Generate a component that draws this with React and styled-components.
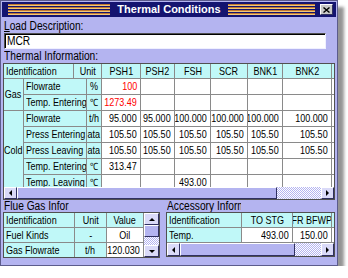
import styled, { createGlobalStyle, css } from 'styled-components';

const LAV = '#b4b4f0';
const CYAN = '#c0f8f8';
const LINE = '#8a8a8a';
const NAVY = '#141470';

const GlobalStyle = createGlobalStyle`
  html, body { margin: 0; padding: 0; background: #ffffff; }
  body { font-family: "Liberation Sans", Arial, sans-serif; color: #000; }
  * { box-sizing: border-box; }
`;

const bevel = css`
  border: 1px solid;
  border-color: #ffffff #303060 #303060 #ffffff;
`;

const justify = { left: 'flex-start', center: 'center', right: 'flex-end' };

// the original uses a narrow bitmap font, so squeeze the glyphs horizontally
const Txt = styled.span`
  display: inline-block;
  flex: none;
  white-space: nowrap;
  transform: scaleX(${p => p.$sx || 0.82});
  transform-origin: ${p => p.$origin || 'left'} center;
`;

const Window = styled.div`
  width: 338px;
  height: 266px;
  background: ${LAV};
  border: 1px solid #5c5c8c;
  padding: 1px;
  box-shadow: 6px 7px 3px rgba(0, 0, 0, 0.42);
  display: flex;
  flex-direction: column;
`;

const TitleBar = styled.div`
  height: 15px;
  background: ${NAVY};
  display: grid;
  grid-template-columns: 1fr auto 1fr;
  align-items: center;
`;

const TitleSide = styled.div`
  display: flex;
  align-items: center;
  padding: ${p => (p.$right ? '0 3px 0 0' : '0 0 0 6px')};
`;

const Stripes = styled.div`
  flex: 1;
  height: 11px;
  background: repeating-linear-gradient(to bottom, #c07830 0 1px, #f0c878 1px 2px, ${NAVY} 2px 3px);
`;

const TitleText = styled.div`
  padding: 0 7px;
  color: #fff;
  font-weight: bold;
  font-size: 11px;
  line-height: 15px;
  white-space: nowrap;
`;

const CloseButton = styled.div`
  ${bevel}
  width: 13px;
  height: 11px;
  margin-left: 5px;
  background: #c8c8c8;
  display: flex;
  align-items: center;
  justify-content: center;
`;

const Body = styled.div`
  flex: 1;
  padding: 0 1px;
  display: flex;
  flex-direction: column;
`;

const Label = styled.div`
  font-size: 12px;
  line-height: ${p => p.$h || 14}px;
  height: ${p => p.$h || 14}px;
  padding-left: 1px;
  margin-top: ${p => p.$mt || 0}px;
  width: ${p => (p.$w ? `${p.$w}px` : 'auto')};
  display: flex;
  overflow: hidden;
`;

const TextBox = styled.div`
  margin-left: 1px;
  width: 322px;
  height: 16px;
  background: #fff;
  border: 1px solid;
  border-color: #505050 #f0f0ff #f0f0ff #505050;
  box-shadow: inset 1px 1px 0 #000;
  font-size: 12px;
  line-height: 14px;
  padding-left: 2px;
  display: flex;
`;

const Frame = styled.div`
  border: 1px solid #505050;
  width: ${p => p.$w}px;
  background: ${LINE};
  display: flex;
  flex-direction: column;
  flex: none;
`;

const Viewport = styled.div`
  height: ${p => p.$h}px;
  overflow: hidden;
  display: flex;
  flex-direction: column;
  gap: 1px;
`;

const Sheet = styled.div`
  display: grid;
  grid-template-columns: ${p => p.$cols};
  grid-auto-rows: ${p => p.$row}px;
  gap: 1px;
`;

const Cell = styled.div`
  background: ${p => (p.$cyan ? CYAN : '#ffffff')};
  color: ${p => (p.$red ? '#ff0000' : '#000')};
  font-size: ${p => p.$fs || 11}px;
  display: flex;
  align-items: center;
  justify-content: ${p => justify[p.$align || 'left']};
  padding: 0 ${p => (p.$align === 'right' ? '3px' : '0')} 1px ${p => (!p.$align || p.$align === 'left' ? '2px' : '0')};
  overflow: hidden;
  grid-row: ${p => (p.$span ? `span ${p.$span}` : 'auto')};
`;

const HScroll = styled.div`
  height: ${p => p.$h || 13}px;
  display: flex;
  background: repeating-conic-gradient(${LAV} 0 25%, #ffffff 0 50%) 0 0 / 2px 2px;
  flex: none;
`;

const VScroll = styled.div`
  grid-column: 4;
  grid-row: 1 / span 3;
  display: flex;
  flex-direction: column;
  background: repeating-conic-gradient(${LAV} 0 25%, #ffffff 0 50%) 0 0 / 2px 2px;
`;

const Track = styled.div`
  flex: 1;
`;

const arrows = {
  left: css`border-width: 3px 3px 3px 0; border-color: transparent #000 transparent transparent;`,
  right: css`border-width: 3px 0 3px 3px; border-color: transparent transparent transparent #000;`,
  up: css`border-width: 0 3px 3px 3px; border-color: transparent transparent #000 transparent;`,
  down: css`border-width: 3px 3px 0 3px; border-color: #000 transparent transparent transparent;`,
};

const ArrowButton = styled.div`
  ${bevel}
  width: ${p => p.$w || 13}px;
  height: ${p => (p.$h ? `${p.$h}px` : 'auto')};
  flex: none;
  background: #dadaf8;
  display: flex;
  align-items: center;
  justify-content: center;
  &::after {
    content: '';
    width: 0;
    height: 0;
    border-style: solid;
    ${p => arrows[p.$dir]}
  }
`;

const Thumb = styled.div`
  ${bevel}
  flex: none;
  width: ${p => (p.$w ? `${p.$w}px` : 'auto')};
  height: ${p => (p.$h ? `${p.$h}px` : 'auto')};
  background: ${LAV};
`;

const BottomRow = styled.div`
  display: flex;
  gap: 6px;
`;

const Panel = styled.div`
  display: flex;
  flex-direction: column;
`;

const Spacer = styled.div`
  height: 1px;
`;

const COLS = ['PSH1', 'PSH2', 'FSH', 'SCR', 'BNK1', 'BNK2'];
const six = v => Array(6).fill(v);

const ROWS = [
  { group: 'Gas', span: 2, label: 'Flowrate', unit: '%', vals: ['100', '', '', '', '', ''], red: true },
  { label: 'Temp. Entering', unit: '℃', vals: ['1273.49', '', '', '', '', ''], red: true },
  { group: 'Cold', span: 5, label: 'Flowrate', unit: 't/h', vals: ['95.000', '95.000', '100.000', '100.000', '100.000', '100.000'] },
  { label: 'Press Entering', unit: 'ata', vals: six('105.50') },
  { label: 'Press Leaving', unit: 'ata', vals: six('105.50') },
  { label: 'Temp. Entering', unit: '℃', vals: ['313.47', '', '', '', '', ''] },
  { label: 'Temp. Leaving', unit: '℃', vals: ['', '', '493.00', '', '', ''] },
];

// cell with squeezed text
const C = ({ children, align = 'left', ...rest }) => (
  <Cell $align={align} {...rest}>
    {children !== undefined && children !== '' && <Txt $origin={align}>{children}</Txt>}
  </Cell>
);

const Scrollbar = ({ thumb, h }) => (
  <HScroll $h={h}>
    <ArrowButton $dir="left" />
    <Thumb $w={thumb} />
    <Track />
    <ArrowButton $dir="right" />
  </HScroll>
);

export default function App() {
  return (
    <>
      <GlobalStyle />
      <Window>
        <TitleBar>
          <TitleSide><Stripes /></TitleSide>
          <TitleText>Thermal Conditions</TitleText>
          <TitleSide $right>
            <Stripes />
            <CloseButton>
              <svg width="7" height="6" viewBox="0 0 7 6">
                <path d="M0.5 0.5 L6.5 5.5 M6.5 0.5 L0.5 5.5" stroke="#000" strokeWidth="1.4" />
              </svg>
            </CloseButton>
          </TitleSide>
        </TitleBar>
        <Body>
          <Label $mt={2}><Txt $sx={0.85}><u>L</u>oad Description:</Txt></Label>
          <TextBox><Txt $sx={0.85}>MCR</Txt></TextBox>
          <Label><Txt $sx={0.85}>Thermal Information:</Txt></Label>
          <Frame $w={332}>
            <Viewport $h={123}>
              <Sheet $cols="69px 27px 38px 33px 35px 36px 34px 48px 2px" $row={14}>
                <C $cyan>Identification</C>
                <C $cyan align="center">Unit</C>
                {COLS.map(c => <C key={c} $cyan align="center">{c}</C>)}
                <C $cyan />
              </Sheet>
              <Sheet $cols="19px 62px 14px 38px 33px 35px 36px 34px 48px 2px" $row={15}>
                {ROWS.map((r, i) => [
                  r.group && <C key={`g${i}`} $cyan align="center" $span={r.span}>{r.group}</C>,
                  <C key={`l${i}`} $cyan>{r.label}</C>,
                  <C key={`u${i}`} $cyan align="center" $fs={r.unit === '℃' ? 10 : 11}>{r.unit}</C>,
                  ...r.vals.map((v, j) => <C key={`v${i}${j}`} align="right" $red={r.red}>{v}</C>),
                  <C key={`e${i}`} />,
                ])}
              </Sheet>
            </Viewport>
            <Scrollbar thumb={260} h={12} />
          </Frame>
          <BottomRow>
            <Panel>
              <Label $h={12} $w={66}><Txt $sx={0.85}>Flue Gas Information</Txt></Label>
              <Frame $w={157}>
                <Sheet $cols="70px 31px 36px 15px" $row={14}>
                  <C $cyan>Identification</C>
                  <C $cyan align="center">Unit</C>
                  <C $cyan align="center">Value</C>
                  <VScroll>
                    <ArrowButton $dir="up" $w={15} $h={12} />
                    <Thumb $h={12} />
                    <Track />
                    <ArrowButton $dir="down" $w={15} $h={12} />
                  </VScroll>
                  <C $cyan>Fuel Kinds</C>
                  <C $cyan align="center">-</C>
                  <C align="center">Oil</C>
                  <C $cyan>Gas Flowrate</C>
                  <C $cyan align="center">t/h</C>
                  <C align="right">120.030</C>
                </Sheet>
              </Frame>
            </Panel>
            <Panel>
              <Label $h={12} $w={75}><Txt $sx={0.85}>Accessory Information</Txt></Label>
              <Frame $w={169}>
                <Viewport $h={29}>
                  <Sheet $cols="74px 50px 38px 2px" $row={14}>
                    <C $cyan>Identification</C>
                    <C $cyan align="center">TO STG</C>
                    <C $cyan align="center">FR BFWP</C>
                    <C $cyan />
                    <C $cyan>Temp.</C>
                    <C align="right">493.00</C>
                    <C align="right">150.00</C>
                    <C />
                  </Sheet>
                </Viewport>
                <Spacer />
                <Scrollbar thumb={115} />
              </Frame>
            </Panel>
          </BottomRow>
        </Body>
      </Window>
    </>
  );
}
